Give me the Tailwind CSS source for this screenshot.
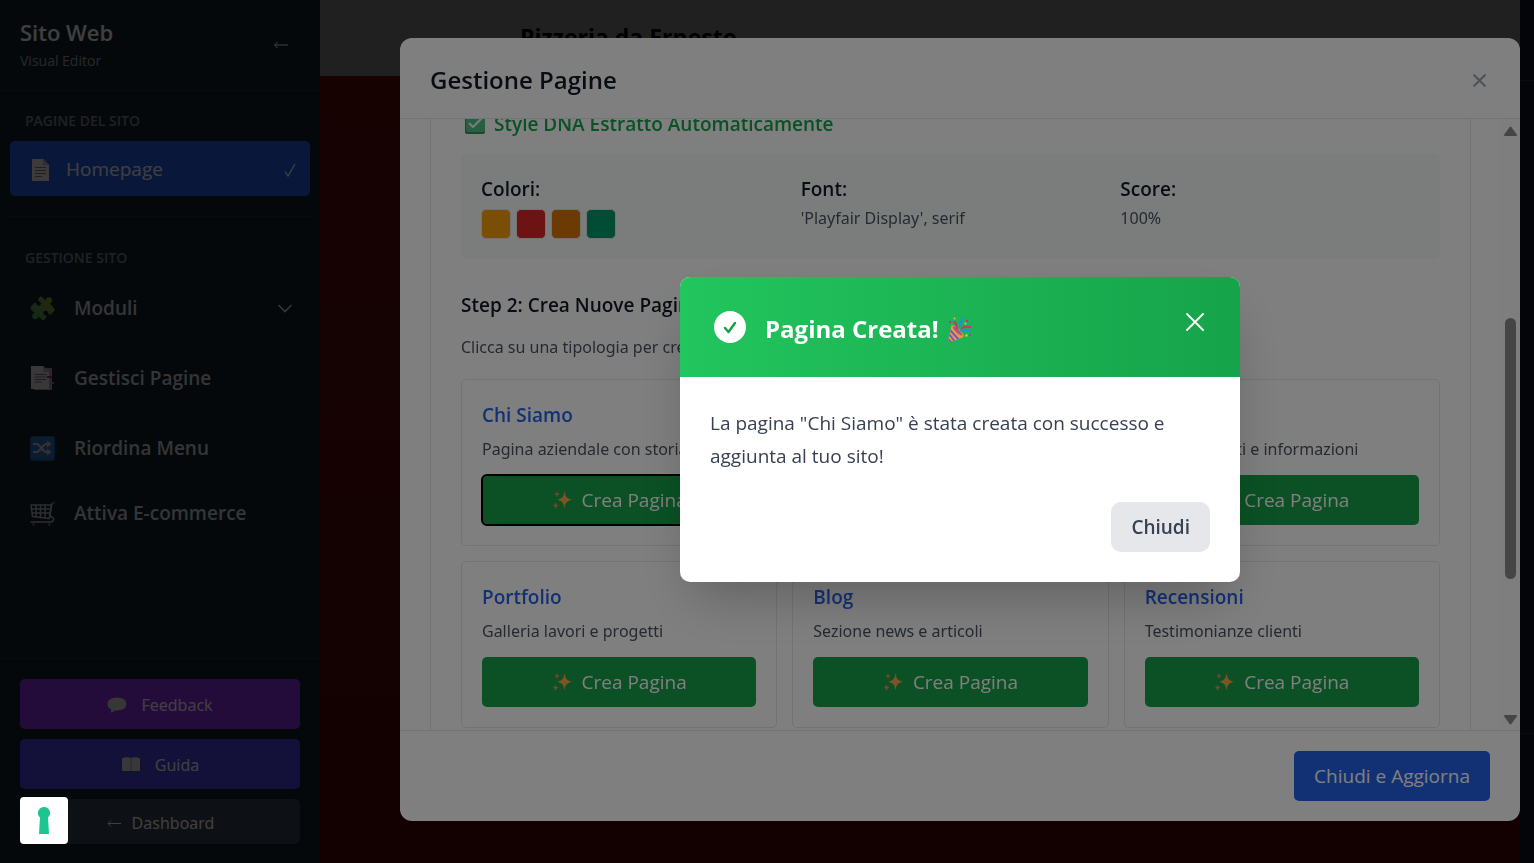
<!DOCTYPE html>
<html lang="it">

<head>
    <meta charset="UTF-8">
    <meta name="viewport" content="width=device-width, initial-scale=1.0">
    <title>Sito Web - Visual Editor</title>
    <script src="https://cdn.jsdelivr.net/npm/@tailwindcss/browser@4"></script>
</head>

<body class="h-screen overflow-hidden bg-[#111827] font-['Open_Sans','Noto_Sans',sans-serif]">
    <!-- shared icon -->
    <svg class="hidden">
        <symbol id="sparkles" viewBox="0 0 20 20">
            <path fill="#fba94c" d="M12.500 1c.8 5.400 1.800 7.400 7.500 8.700-5.700 1.300-6.700 3.300-7.500 8.800-.8-5.500-1.800-7.500-7.400-8.800C10.700 8.400 11.700 6.400 12.500 1z" />
            <path fill="#f08a5d" d="M5 .8c.4 2.100.8 2.800 2.900 3.300C5.800 4.600 5.400 5.300 5 7.400 4.600 5.300 4.200 4.600 2.200 4.100 4.200 3.600 4.600 2.900 5 .8zM3.600 12c.5 2.300.9 3.100 3.300 3.600-2.400.5-2.800 1.300-3.300 3.700-.4-2.400-.9-3.200-3.200-3.700 2.300-.5 2.800-1.300 3.200-3.600z" />
        </symbol>
    </svg>

    <div class="flex h-full">
        <aside class="flex w-80 shrink-0 flex-col bg-[#14222b]">
            <div class="flex items-center justify-between border-b border-[#26333d] px-5 pt-4 pb-[17px]">
                <div>
                    <h2 class="text-[22px] leading-8 font-semibold text-white">Sito Web</h2>
                    <p class="text-[14px] leading-[25px] text-[#9ca3af]">Visual Editor</p>
                </div>
                <button class="p-[10px] text-white" aria-label="Comprimi">
                    <svg class="h-4 w-[18px]" viewBox="0 0 18 16" fill="none" stroke="currentColor">
                        <path d="M16 8H2.500M5.500 5 2.500 8l3 3" />
                    </svg>
                </button>
            </div>

            <nav class="px-[10px]">
                <h3 class="px-[15px] pt-[17px] pb-2 text-[14px] leading-[25px] font-semibold text-[#7d8590]">PAGINE DEL SITO</h3>
                <button class="flex h-[55px] w-full items-center rounded-[5px] bg-[#2563eb] pt-0.5 pr-[14px] pl-5 text-[19px] text-white">
                    <svg class="mr-[16px] h-6 w-5" viewBox="0 0 20 24">
                        <path fill="#f4e8ee" d="M2 1h11l6 6v16H2z" />
                        <path fill="#c5b9c4" d="M13 1v6h6z" />
                        <path stroke="#8a7f8c" d="M5 9.500h11M5 12.500h11M5 15.500h11M5 18.500h7" />
                    </svg>
                    Homepage
                    <svg class="ml-auto h-4 w-3" viewBox="0 0 12 16" fill="none" stroke="currentColor" stroke-width="1.300">
                        <path d="M1 9.500 4 14 11 2" />
                    </svg>
                </button>

                <h3 class="mt-5 border-t border-[#26333d] px-[15px] pt-7 pb-[6px] text-[14px] leading-[25px] font-semibold text-[#7d8590]">GESTIONE SITO</h3>
                <button class="mb-[5px] flex h-[65px] w-full items-center pr-[17px] pl-5 text-[19px] font-semibold text-[#d1d5db]">
                    <svg class="mr-[19px] h-[25px] w-[25px]" viewBox="0 0 25 25">
                        <defs>
                            <linearGradient id="puzzle" x1="1" y1="0" x2="0" y2="1">
                                <stop stop-color="#a2a02c" />
                                <stop offset="1" stop-color="#3fa66b" />
                            </linearGradient>
                        </defs>
                        <path fill="url(#puzzle)" d="M9.500 1.500c1-1.300 2-1.300 3 0l3.300 3c.2-3 2.200-3.800 4.200-3 2.800 1 3 4.800-.2 6l4.200 4.700c1 1 1 2 0 3l-3.500 3.300c-1 .6-1.800.2-2-.9-.4-2.600-2-3.600-3.900-2.500-2 1.200-1.600 3.600.8 4.300 1.300.4 1.600 1.200.8 2.200l-1.700 2.100c-.8.800-1.600.800-2.400 0l-3.500-3.300c-.8 2.700-3 3.600-5 2.400-2.500-1.600-1.700-5.200 1-5.500L1 13.200c-.9-1-.9-1.900 0-2.800L4.300 7c1-.7 1.700-.4 2.100.8.8 2 2.400 2.500 3.800 1.400 1.500-1.500.8-3.200-1-3.900-1.400-.5-1.600-1.500-.7-2.500z" />
                    </svg>
                    Moduli
                    <svg class="ml-auto h-4 w-4" viewBox="0 0 16 16" fill="none" stroke="currentColor" stroke-width="1.600">
                        <path d="M1.500 4 8 10.500 14.500 4" />
                    </svg>
                </button>
                <button class="mb-[5px] flex h-[65px] w-full items-center pl-5 text-[19px] font-semibold text-[#d1d5db]">
                    <svg class="mr-[19px] h-[25px] w-[25px]" viewBox="0 0 25 25">
                        <path fill="#a49ca8" d="M4 2h18v22H4z" />
                        <path fill="#e8dfe6" d="M1 0h12l6 6v17H1z" />
                        <path fill="#b9aeb9" d="M13 0v6h6z" />
                        <path stroke="#7b7280" d="M4.500 8.500h12M4.500 11h12M4.500 13.500h12M4.500 16h7" />
                        <path fill="#b03357" d="M17 10h5v2h-5z" />
                        <path fill="#b5883a" d="M20 16h4v2h-4z" />
                    </svg>
                    Gestisci Pagine
                </button>
                <button class="mb-[5px] flex h-[65px] w-full items-center pl-5 text-[19px] font-semibold text-[#d1d5db]">
                    <svg class="mr-[19px] h-[25px] w-[25px]" viewBox="0 0 25 25">
                        <rect width="25" height="25" rx="3" fill="#1f5f9f" />
                        <rect x="1" y="1" width="23" height="22" rx="2" fill="#2873b7" />
                        <path fill="none" stroke="#c8c5d0" stroke-width="2.200" d="M3 8h3.500c4 0 6 8 10 8H19M3 16h3.500c4 0 6-8 10-8H19" />
                        <path fill="#c8c5d0" d="M17 4.500 21.500 8 17 11.500zM17 12.500 21.500 16 17 19.500z" />
                    </svg>
                    Riordina Menu
                </button>
                <button class="flex h-[55px] w-full items-center pl-5 text-[19px] font-semibold text-[#d1d5db]">
                    <svg class="mr-[19px] h-[25px] w-[25px]" viewBox="0 0 25 25" fill="none" stroke="#b8b6bf" stroke-width="1.500" stroke-linejoin="round" stroke-linecap="round">
                        <path d="M1 4h20.500l-2 13.500-17-2zM1.500 8h19.500M2 12h18.500M6 4v12M10.500 4v12.500M15 4v13" />
                        <path d="M24 2h-2l-2.500 13.500c3 0 4.500 1.500 4 3.500-.5 1.500-1.500 2-3 2H1" />
                        <g fill="#3a6a94" stroke="none">
                            <circle cx="3.500" cy="23.500" r="1.500" />
                            <circle cx="19.500" cy="23.500" r="1.500" />
                            <path d="M21.500 1h3.500v2h-3.500z" />
                        </g>
                    </svg>
                    Attiva E-commerce
                </button>
            </nav>

            <div class="mt-auto flex flex-col gap-[10px] border-t border-[#26333d] px-5 pt-5 pb-[19px] font-['Noto_Sans','Open_Sans',sans-serif]">
                <button class="flex h-[50px] items-center justify-center gap-[14px] rounded-[5px] bg-[#9333ea] pt-0.5 text-[16px] text-white">
                    <svg class="h-4 w-5" viewBox="0 0 20 16">
                        <path fill="#dedde2" d="M10 .5c5.500 0 9.500 2.800 9.500 6.500s-4 6.500-9.500 6.500H8c-1 1-2.300 1.800-4.500 2 .8-.9 1-1.700.7-3C2 11.300.5 9.300.5 7 .5 3.300 4.500.5 10 .5z" />
                    </svg>
                    Feedback
                </button>
                <button class="flex h-[50px] items-center justify-center gap-[14px] rounded-[5px] bg-[#4f46e5] pt-0.5 text-[16px] text-white">
                    <svg class="h-4 w-5" viewBox="0 0 20 16">
                        <path fill="#2d5f86" d="M0 2h20v13.500H11l-1 .5-1-.5H0z" />
                        <path fill="#e4dee6" d="M1 1.500C4-.2 7.500 0 10 1c2.500-1 6-1.200 9 .5V14H1z" />
                        <path stroke="#9b92a1" d="M10 1v13" />
                    </svg>
                    Guida
                </button>
                <a href="#" class="flex h-[45px] items-center justify-center gap-[10px] rounded-[5px] bg-[#374151] pt-0.5 text-[16px] text-white">
                    <svg class="h-4 w-4" viewBox="0 0 16 16" fill="none" stroke="currentColor">
                        <path d="M15 8.500H2M5 5.500l-3 3 3 3" />
                    </svg>
                    Dashboard
                </a>
            </div>
        </aside>

        <main class="flex flex-1 flex-col bg-linear-to-b from-[#5e0c0c] to-[#4c0404]">
            <header class="h-[76px] bg-[#808080] px-[200px]">
                <h1 class="text-[23px] leading-[74px] font-bold text-black">Pizzeria da Ernesto</h1>
            </header>
        </main>

        <!-- collapsed properties panel -->
        <aside class="flex w-[14px] shrink-0 flex-col bg-[#0f1521]">
            <div class="h-[81px] border-b border-[#2a313d]"></div>
            <div class="flex-1"></div>
            <div class="h-[130px] border-t border-[#2a313d]"></div>
        </aside>
    </div>

    <!-- Gestione Pagine -->
    <div class="fixed inset-0 flex justify-end bg-black/50 pt-[38px] pr-[14px] pb-[42px]">
        <div class="flex w-full max-w-[1120px] flex-col overflow-hidden rounded-[12px] bg-white text-[#111827]">
            <div class="flex items-center justify-between border-b border-[#e5e7eb] px-[30px] pt-[22px] pb-[18px]">
                <h2 class="text-[24px] leading-10 font-semibold">Gestione Pagine</h2>
                <button class="py-3 pr-1 pl-3 text-[#9ca3af]" aria-label="Chiudi">
                    <svg class="h-[13px] w-[13px]" viewBox="0 0 13 13" stroke="currentColor" stroke-width="2">
                        <path d="m.5.5 12 12M12.500.5l-12 12" />
                    </svg>
                </button>
            </div>

            <div class="flex min-h-0 flex-1">
                <div class="flex-1 overflow-hidden pr-[29px] pl-[30px]">
                    <div class="-mt-[10px] h-[640px] border-x border-[#e5e7eb] px-[30px]">
                        <h3 class="flex items-center gap-2 pl-[3px] text-[19px] leading-[30px] font-semibold text-[#16a34a]">
                            <svg class="h-[22px] w-[22px]" viewBox="0 0 22 22">
                                <rect x="1" y="1" width="20" height="20" rx="2" fill="#3a8d62" />
                                <rect x="2" y="1" width="19" height="18" rx="2" fill="#51bd84" />
                                <path d="m5 10 4 4 9-9" fill="none" stroke="#f3f3f3" stroke-width="2.200" />
                            </svg>
                            Style DNA Estratto Automaticamente
                        </h3>

                        <div class="mt-[15px] grid grid-cols-3 gap-5 rounded-[5px] bg-[#f4fbf7] p-5">
                            <div>
                                <h4 class="text-[19px] leading-[30px] font-semibold">Colori:</h4>
                                <div class="mt-[5px] flex gap-[5px]">
                                    <span class="h-[30px] w-[30px] rounded-[5px] border border-[#e5e7eb] bg-[#f59e0b]"></span>
                                    <span class="h-[30px] w-[30px] rounded-[5px] border border-[#e5e7eb] bg-[#dc2626]"></span>
                                    <span class="h-[30px] w-[30px] rounded-[5px] border border-[#e5e7eb] bg-[#d97706]"></span>
                                    <span class="h-[30px] w-[30px] rounded-[5px] border border-[#e5e7eb] bg-[#059669]"></span>
                                </div>
                            </div>
                            <div>
                                <h4 class="text-[19px] leading-[30px] font-semibold">Font:</h4>
                                <p class="font-['Noto_Sans','Open_Sans',sans-serif] text-[16px] leading-[28px] text-[#4b5563]">'Playfair Display', serif</p>
                            </div>
                            <div>
                                <h4 class="text-[19px] leading-[30px] font-semibold">Score:</h4>
                                <p class="font-['Noto_Sans','Open_Sans',sans-serif] text-[16px] leading-[28px] text-[#4b5563]">100%</p>
                            </div>
                        </div>

                        <h3 class="mt-[30px] text-[19px] leading-8 font-semibold">Step 2: Crea Nuove Pagine</h3>
                        <p class="mt-3 mb-[18px] font-['Noto_Sans','Open_Sans',sans-serif] text-[16px] leading-[28px] text-[#4b5563]">Clicca su una tipologia per creare la pagina:</p>

                        <div class="grid grid-cols-3 gap-[15px]">
                            <div class="rounded-[5px] border border-[#e5e7eb] p-5">
                                <h4 class="text-[19px] leading-[30px] font-semibold text-[#2563eb]">Chi Siamo</h4>
                                <p class="mt-[5px] mb-3 truncate font-['Noto_Sans','Open_Sans',sans-serif] text-[16px] leading-[28px] text-[#4b5563]">Pagina aziendale con storia e team</p>
                                <button class="flex h-[50px] w-full items-center justify-center gap-[10px] rounded-[5px] bg-[#16a34a] text-[19px] text-white outline-2 -outline-offset-1 outline-black">
                                    <svg class="h-5 w-5"><use href="#sparkles" /></svg>Crea Pagina
                                </button>
                            </div>
                            <div class="rounded-[5px] border border-[#e5e7eb] p-5">
                                <h4 class="text-[19px] leading-[30px] font-semibold text-[#2563eb]">Servizi</h4>
                                <p class="mt-[5px] mb-3 truncate font-['Noto_Sans','Open_Sans',sans-serif] text-[16px] leading-[28px] text-[#4b5563]">Elenco servizi offerti</p>
                                <button class="flex h-[50px] w-full items-center justify-center gap-[10px] rounded-[5px] bg-[#16a34a] text-[19px] text-white">
                                    <svg class="h-5 w-5"><use href="#sparkles" /></svg>Crea Pagina
                                </button>
                            </div>
                            <div class="rounded-[5px] border border-[#e5e7eb] p-5">
                                <h4 class="text-[19px] leading-[30px] font-semibold text-[#2563eb]">Contatti</h4>
                                <p class="mt-[5px] mb-3 truncate font-['Noto_Sans','Open_Sans',sans-serif] text-[16px] leading-[28px] text-[#4b5563]">Form contatti e informazioni</p>
                                <button class="flex h-[50px] w-full items-center justify-center gap-[10px] rounded-[5px] bg-[#16a34a] text-[19px] text-white">
                                    <svg class="h-5 w-5"><use href="#sparkles" /></svg>Crea Pagina
                                </button>
                            </div>
                            <div class="rounded-[5px] border border-[#e5e7eb] p-5">
                                <h4 class="text-[19px] leading-[30px] font-semibold text-[#2563eb]">Portfolio</h4>
                                <p class="mt-[5px] mb-3 truncate font-['Noto_Sans','Open_Sans',sans-serif] text-[16px] leading-[28px] text-[#4b5563]">Galleria lavori e progetti</p>
                                <button class="flex h-[50px] w-full items-center justify-center gap-[10px] rounded-[5px] bg-[#16a34a] text-[19px] text-white">
                                    <svg class="h-5 w-5"><use href="#sparkles" /></svg>Crea Pagina
                                </button>
                            </div>
                            <div class="rounded-[5px] border border-[#e5e7eb] p-5">
                                <h4 class="text-[19px] leading-[30px] font-semibold text-[#2563eb]">Blog</h4>
                                <p class="mt-[5px] mb-3 truncate font-['Noto_Sans','Open_Sans',sans-serif] text-[16px] leading-[28px] text-[#4b5563]">Sezione news e articoli</p>
                                <button class="flex h-[50px] w-full items-center justify-center gap-[10px] rounded-[5px] bg-[#16a34a] text-[19px] text-white">
                                    <svg class="h-5 w-5"><use href="#sparkles" /></svg>Crea Pagina
                                </button>
                            </div>
                            <div class="rounded-[5px] border border-[#e5e7eb] p-5">
                                <h4 class="text-[19px] leading-[30px] font-semibold text-[#2563eb]">Recensioni</h4>
                                <p class="mt-[5px] mb-3 truncate font-['Noto_Sans','Open_Sans',sans-serif] text-[16px] leading-[28px] text-[#4b5563]">Testimonianze clienti</p>
                                <button class="flex h-[50px] w-full items-center justify-center gap-[10px] rounded-[5px] bg-[#16a34a] text-[19px] text-white">
                                    <svg class="h-5 w-5"><use href="#sparkles" /></svg>Crea Pagina
                                </button>
                            </div>
                        </div>
                    </div>
                </div>

                <!-- scrollbar -->
                <div class="flex w-5 flex-col items-center bg-[#fcfcfc] pt-[7px] pb-[5px]">
                    <svg class="h-[10px] w-[13px]" viewBox="0 0 13 10" fill="#8b8b8b" stroke="#8b8b8b" stroke-width="2" stroke-linejoin="round">
                        <path d="M6.500 1.500 12 9H1z" />
                    </svg>
                    <div class="flex-[183]"></div>
                    <div class="h-[261px] w-[11px] rounded-full bg-[#8b8b8b]"></div>
                    <div class="flex-[136]"></div>
                    <svg class="h-[10px] w-[13px]" viewBox="0 0 13 10" fill="#8b8b8b" stroke="#8b8b8b" stroke-width="2" stroke-linejoin="round">
                        <path d="M6.500 8.500 12 1H1z" />
                    </svg>
                </div>
            </div>

            <div class="flex justify-end border-t border-[#e5e7eb] px-[30px] py-5">
                <button class="h-[50px] rounded-[5px] bg-[#2563eb] px-5 text-[19px] text-white">Chiudi e Aggiorna</button>
            </div>
        </div>
    </div>

    <!-- Pagina Creata -->
    <div class="fixed inset-0 flex items-center justify-end bg-black/50 pr-[294px] pb-1">
        <div class="w-full max-w-[560px] overflow-hidden rounded-[10px] bg-white shadow-2xl">
            <div class="flex h-[100px] items-center bg-linear-to-r from-[#22c55e] to-[#16a34a] px-[30px] text-white">
                <svg class="mr-[15px] h-10 w-10" viewBox="0 0 40 40">
                    <circle cx="20" cy="20" r="16" fill="#fff" />
                    <path d="m15 21 3.500 4 6.500-9" fill="none" stroke="#16a34a" stroke-width="2.500" stroke-linecap="round" stroke-linejoin="round" />
                </svg>
                <h3 class="pt-[3px] text-[24px] leading-10 font-bold">Pagina Creata!</h3>
                <svg class="mt-1 ml-[9px] h-[25px] w-[25px]" viewBox="0 0 25 25">
                    <defs>
                        <clipPath id="cone">
                            <path d="M3.500 8.500C8 10 14 15.500 15.500 20L3 25C1 25.300.2 24.500.3 22.500z" />
                        </clipPath>
                    </defs>
                    <path fill="#f5993e" d="M3.500 8.500C8 10 14 15.500 15.500 20L3 25C1 25.300.2 24.500.3 22.500z" />
                    <path clip-path="url(#cone)" fill="none" stroke="#6b5bd0" stroke-width="2" d="m2 13 10 11M1 17l7 9M0 22l4 4" />
                    <path fill="#e8953a" d="M3.500 8.500c3-1.500 13 7.500 12 11.500-3 1-13-7.500-12-11.500z" />
                    <path fill="#a8587a" d="M5 9.500c2.500-.5 9.500 6 9 9-2.500.3-9.500-6-9-9z" />
                    <path fill="none" stroke="#1e90e8" stroke-width="2" d="M14 .5c1.500 3.500-3.500 5-1.500 8.500M12.500 14.500c3.500-3 6 .5 10.500-1.500" />
                    <path fill="none" stroke="#e0258c" stroke-width="2" d="M5.500 5c3.500-.5 2 4.500 4 7M13.500 12c3-4.500 5.500-.5 9.500-2.500" />
                    <g fill="#fbbf24">
                        <circle cx="6.500" cy="1.500" r="1" />
                        <circle cx="17.500" cy="6.500" r="1" />
                        <circle cx="18.500" cy="18.500" r="1.200" />
                    </g>
                    <g fill="#e0258c">
                        <circle cx="19" cy="4" r="1.200" />
                        <circle cx="2" cy="5" r="1.200" />
                        <circle cx="22" cy="18" r="1" />
                    </g>
                </svg>
                <button class="ml-auto px-[6px] pb-[10px]" aria-label="Chiudi">
                    <svg class="h-[18px] w-[18px]" viewBox="0 0 18 18" stroke="currentColor" stroke-width="1.800" stroke-linecap="round">
                        <path d="m1 1 16 16M17 1 1 17" />
                    </svg>
                </button>
            </div>
            <div class="p-[30px]">
                <p class="text-[19px] leading-[33px] text-[#374151]">La pagina "Chi Siamo" è stata creata con successo e aggiunta al tuo sito!</p>
                <div class="mt-[29px] flex justify-end">
                    <button class="h-[50px] rounded-[10px] bg-[#e5e7eb] px-5 text-[19px] font-semibold text-[#374151]">Chiudi</button>
                </div>
            </div>
        </div>
    </div>

    <!-- privacy badge -->
    <button class="fixed bottom-[19px] left-5 flex h-[47px] w-12 items-center justify-center rounded-[4px] bg-white" aria-label="Preferenze privacy">
        <svg class="h-[27px] w-3" viewBox="0 0 12 27" fill="#1cc691">
            <path d="M6 0a6 6 0 0 1 4 10.500L11 27H1l1-16.500A6 6 0 0 1 6 0z" />
        </svg>
    </button>
</body>

</html>
